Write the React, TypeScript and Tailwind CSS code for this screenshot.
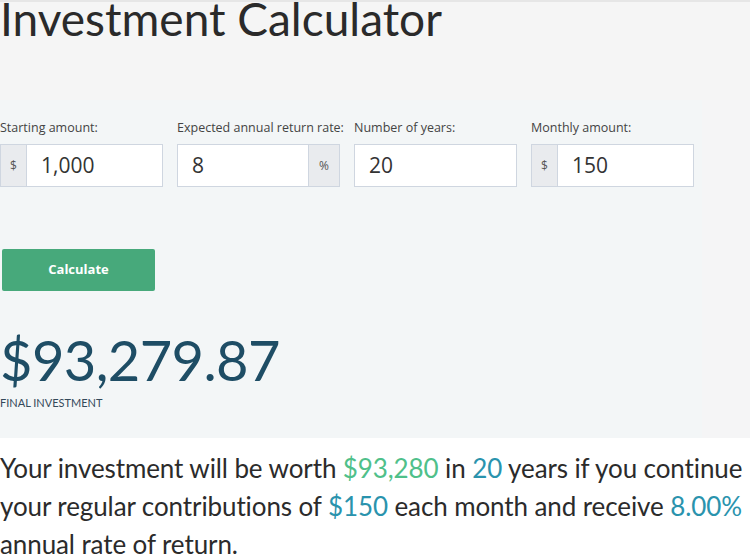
export default function App() {
  const round = "[font-family:Lato,'Noto_Sans',sans-serif]";
  return (
    <div className="w-[750px] h-[554px] overflow-hidden bg-[#f5f5f6] border-t-2 border-[#e6e6e6]">
      <div className="bg-[#f5f5f5] h-[98px] overflow-hidden">
        <h1 className={`${round} text-[46px] leading-none text-[#2a2a2a] -mt-[6px]`}>
          Investment Calculator
        </h1>
      </div>
      <div className="w-[702px] bg-[#f3f6f7] h-[338px] font-['Open_Sans',sans-serif]">
        <div className="flex gap-[14px] pt-[19px]">
          <Field label="Starting amount:" value="1,000" prefix="$" />
          <Field label="Expected annual return rate:" value="8" suffix="%" />
          <Field label="Number of years:" value="20" />
          <Field label="Monthly amount:" value="150" prefix="$" />
        </div>
        <button className="mt-[62px] ml-[2px] w-[153px] h-[42px] rounded-[2px] bg-[#47a97b] text-white text-[13px] font-bold">
          Calculate
        </button>
        <div className={`${round} mt-[41px] text-[56px] leading-none text-[#1e4d65] tracking-[-0.6px]`}>$93,279.87</div>
        <div className={`${round} mt-[7px] text-[11px] text-[#34495a] uppercase`}>Final Investment</div>
      </div>
      <div className="bg-white h-[120px] pt-[11px]">
        <p className={`${round} text-[26px] leading-[38px] text-[#2b2b2b] tracking-[-0.1px]`}>
          Your investment will be worth <span className="text-[#4fc08a]">$93,280</span> in{" "}
          <span className="text-[#2a93ad]">20</span> years if you continue your regular contributions of{" "}
          <span className="text-[#2a93ad]">$150</span> each month and receive{" "}
          <span className="text-[#2a93ad]">8.00%</span> annual rate of return.
        </p>
      </div>
    </div>
  );
}

function Field({ label, value, prefix, suffix }: { label: string; value: string; prefix?: string; suffix?: string }) {
  return (
    <div className="w-[163px]">
      <div className="text-[12.5px] text-[#444] leading-[18px] mb-[7px] whitespace-nowrap">{label}</div>
      <div className="flex h-[43px]">
        {prefix && (
          <div className="w-[26px] flex items-center justify-center bg-[#e9ebee] border border-r-0 border-[#cfd6e0] text-[12px] text-[#555]">
            {prefix}
          </div>
        )}
        <div className="flex-1 flex items-center bg-white border border-[#cfd6e0] px-[14px] text-[21px] text-[#333]">
          {value}
        </div>
        {suffix && (
          <div className="w-[31px] flex items-center justify-center bg-[#e9ebee] border border-l-0 border-[#cfd6e0] text-[12px] text-[#555]">
            {suffix}
          </div>
        )}
      </div>
    </div>
  );
}
